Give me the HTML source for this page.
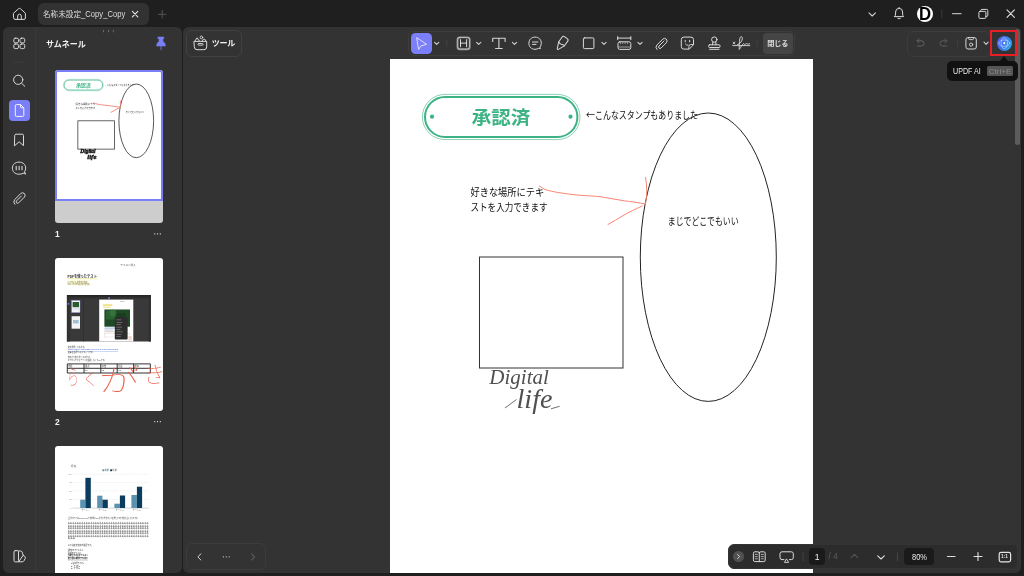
<!DOCTYPE html>
<html lang="ja">
<head>
<meta charset="utf-8">
<title>UPDF</title>
<style>
*{box-sizing:border-box;margin:0;padding:0}
html,body{width:1024px;height:576px;overflow:hidden;background:#1f1f1f}
body{position:relative;font-family:"Liberation Sans","Noto Sans CJK JP",sans-serif;color:#e6e6e6;font-size:8.5px}
.abs{position:absolute}
.t{position:absolute;white-space:nowrap;line-height:1}
#left{left:3.2px;top:27px;width:178.4px;height:545.8px;background:#333;border-radius:6px;overflow:hidden}
#main{left:183.2px;top:27px;width:837.6px;height:545.8px;background:#333;border-radius:6px;overflow:hidden}
#tab{left:38px;top:3px;width:111px;height:21.5px;background:#323232;border-radius:6px}
.box{position:absolute;border:1px solid #3e3e3e;border-radius:6px}
.thumb{position:absolute;left:51.7px;width:108px;background:#fff;border-radius:3px;overflow:hidden}
#page{left:206.9px;top:31.8px;width:423.2px;height:520px;background:#fff}
.doc{color:#111;font-family:"Liberation Sans","Noto Sans CJK JP",sans-serif}
svg{position:absolute;left:0;top:0;overflow:visible}
</style>
</head>
<body>
<div id="wrap" style="position:absolute;left:0;top:0;width:1024px;height:576px;will-change:transform">

<!-- ===== title bar ===== -->
<div id="tab" class="abs"></div>
<div class="t" style="left:43px;top:10.3px;font-size:8.3px;color:#dcdcdc;transform:scaleX(0.919);transform-origin:0 0">名称未設定_Copy_Copy</div>

<!-- ===== left panel ===== -->
<div id="left" class="abs">
  <div class="abs" style="left:32px;top:0;width:1px;height:545px;background:#3a3a3a"></div>
  <div class="abs" style="left:6px;top:73px;width:21px;height:21px;border-radius:4px;background:#7b7ff7"></div>
  <div class="t" style="left:43.2px;top:12.6px;font-size:8.4px;font-weight:bold;color:#f2f2f2;transform:scaleX(0.955);transform-origin:0 0">サムネール</div>

  <!-- thumb 1 -->
  <div class="thumb" id="th1" style="top:43.2px;height:152.5px;background:#cdcdcd;background-image:radial-gradient(#bcbcbc 0.5px,transparent 0.6px);background-size:2px 2px">
    <div class="abs" style="left:0;top:0;width:108px;height:131px;background:#fff;border:2px solid #7b7ff7;border-radius:3px 3px 0 0"></div>
  </div>
  <div class="t" style="left:51.8px;top:203.2px;font-size:8.4px;color:#f4f4f4;font-weight:bold">1</div>
  

  <!-- thumb 2 -->
  <div class="thumb" id="th2" style="top:231px;height:153px"></div>
  <div class="t" style="left:51.8px;top:390.8px;font-size:8.4px;color:#f4f4f4;font-weight:bold">2</div>
  

  <!-- thumb 3 -->
  <div class="thumb" id="th3" style="top:419px;height:153px"></div>
</div>

<!-- ===== main panel ===== -->
<div id="main" class="abs">
  <div id="page" class="abs"></div>
</div>



<div class="box" style="left:186px;top:30px;width:55.5px;height:26.5px;border-color:#414141;z-index:4"></div>
<div class="t" style="left:211.8px;top:39.5px;font-size:8px;font-weight:bold;color:#f0f0f0;z-index:7;letter-spacing:-0.3px">ツール</div>


<!-- ===== center toolbar ===== -->
<div class="box" style="left:408.3px;top:30.5px;width:387.2px;height:25.7px;border-color:#3c3c3c;z-index:4"></div>
<div class="abs" style="left:410.8px;top:32.5px;width:21.3px;height:21.3px;border-radius:4.5px;background:#7b7ffa;z-index:4"></div>
<div class="abs" style="left:763.2px;top:32.8px;width:29.8px;height:20.8px;border-radius:4px;background:#454545;z-index:4"></div>
<div class="t" style="left:767.3px;top:39.8px;font-size:7.2px;font-weight:bold;color:#dedede;z-index:7;letter-spacing:-0.2px">閉じる</div>


<!-- ===== top right / right toolbar ===== -->
<div class="abs" style="left:917px;top:5.6px;width:16.4px;height:16.4px;border-radius:50%;background:#fff;overflow:hidden;z-index:4"></div>
<div class="t" style="left:919.4px;top:5.2px;font-size:18.6px;font-weight:bold;color:#000;z-index:7;transform:scaleX(0.9);transform-origin:0 0">D</div>
<div class="abs" style="left:1014.6px;top:28.5px;width:5.6px;height:116.5px;border-radius:3px;background:#5c5c5c;z-index:4"></div>
<div class="box" style="left:906.6px;top:30.6px;width:84px;height:26.4px;border-color:#3c3c3c;z-index:4"></div>
<div class="abs" style="left:989.7px;top:30px;width:28.4px;height:25.6px;border:2.9px solid #e61e25;z-index:8"></div>
<div class="abs" style="left:996.8px;top:35.7px;width:15px;height:15px;border-radius:50%;background:linear-gradient(115deg,#5a5ff4 0%,#3f78f2 45%,#2bb2e2 100%);z-index:4"></div>
<div class="abs" style="left:947px;top:60.6px;width:71.2px;height:20.6px;border-radius:5px;background:#111;z-index:8"></div>
<div class="abs" style="left:999.7px;top:56px;width:0;height:0;border-left:4.6px solid transparent;border-right:4.6px solid transparent;border-bottom:5px solid #111;z-index:9"></div>
<div class="t" style="left:953px;top:67.2px;font-size:8.4px;color:#e8e8e8;z-index:9;transform:scaleX(0.85);transform-origin:0 0">UPDF AI</div>
<div class="abs" style="left:987px;top:66px;width:26.2px;height:10.2px;border-radius:1.5px;background:#555;z-index:9"></div>
<div class="t" style="left:988.8px;top:67.5px;font-size:8px;color:#8b8b8b;z-index:10;letter-spacing:0px">Ctrl+E</div>


<!-- ===== bottom bars ===== -->
<div class="box" style="left:186.4px;top:543.3px;width:79.2px;height:26.4px;border-color:#3c3c3c;z-index:4"></div>
<div class="abs" style="left:728px;top:543.7px;width:289.6px;height:25.8px;border-radius:6px;background:#2c2c2c;border:1px solid #343434;z-index:6"></div>
<div class="abs" style="left:733.1px;top:551.2px;width:10.6px;height:10.6px;border-radius:50%;background:#515151;z-index:7"></div>
<div class="abs" style="left:809.4px;top:548px;width:15.6px;height:17px;border-radius:4px;background:#1a1a1a;z-index:7"></div>
<div class="t" style="left:814.7px;top:552.6px;font-size:8.6px;color:#f2f2f2;z-index:9">1</div>
<div class="t" style="left:828.6px;top:552.8px;font-size:8.2px;color:#5c5c5c;z-index:9">/ 4</div>
<div class="abs" style="left:904px;top:548px;width:30.3px;height:17px;border-radius:4px;background:#1a1a1a;z-index:7"></div>
<div class="t" style="left:911.8px;top:553px;font-size:8.3px;color:#ececec;z-index:9;transform:scaleX(0.9);transform-origin:0 0">80%</div>
<div class="t" style="left:1001.1px;top:554.7px;font-size:4.8px;font-weight:bold;color:#e6e6e6;z-index:9;letter-spacing:-0.1px">1:1</div>

<!-- ===== document content (global coords) ===== -->
<svg id="docsvg" width="1024" height="576" viewBox="0 0 1024 576" style="z-index:5">
  <!-- stamp -->
  <rect x="422.4" y="94.4" width="157.6" height="45.2" rx="22.6" fill="none" stroke="#3db384" stroke-width="0.7" opacity="0.85"/>
  <rect x="425" y="97" width="152.4" height="40" rx="20" fill="none" stroke="#3db384" stroke-width="2"/>
  <circle cx="432" cy="116.7" r="2.1" fill="#3db384"/>
  <circle cx="570.5" cy="116.7" r="2.1" fill="#3db384"/>
  <text x="471.8" y="124.2" font-family="'Liberation Sans','Noto Sans CJK JP',sans-serif" font-weight="700" font-size="18.6" fill="#3db384" textLength="58.6" lengthAdjust="spacingAndGlyphs">承認済</text>
  <!-- ellipse / rect -->
  <ellipse cx="708.3" cy="257.2" rx="68" ry="144.2" fill="none" stroke="#222" stroke-width="1"/>
  <rect x="479.5" y="257" width="143.5" height="111" fill="none" stroke="#333" stroke-width="1"/>
  <!-- red arrow -->
  <path d="M539.6 186.2 C542 187 543 189 546 189.8 C550 191 553 191.6 557.4 192.4 C565 193.6 571 194.4 578 195.1 C586 195.8 594 196 601 196.8 C609 198 617 199.8 624.4 200.8 C631 201.6 639 202.6 645.4 204.2 C646.4 199 646.9 194 646.7 189.6 C646.6 185 646.2 181 645.6 177.3" fill="none" stroke="#f58672" stroke-width="1" stroke-linecap="round" stroke-linejoin="round"/>
  <path d="M642.2 206 C636 209 629 212 623 215.6 C618 218.6 613 222 608 224.5" fill="none" stroke="#f58672" stroke-width="1" stroke-linecap="round"/>
  <!-- texts -->
  <g font-family="'Liberation Sans','Noto Sans CJK JP',sans-serif" fill="#111" font-size="10.4">
    <text x="586" y="118.8" font-family="'Noto Sans CJK JP',sans-serif" textLength="9" lengthAdjust="spacingAndGlyphs">←</text><text x="595" y="118.8" textLength="103" lengthAdjust="spacingAndGlyphs">こんなスタンプもありました</text>
    <text x="470.5" y="196.2" textLength="73.6" lengthAdjust="spacingAndGlyphs">好きな場所にテキ</text>
    <text x="470.5" y="210.6" textLength="77" lengthAdjust="spacingAndGlyphs">ストを入力できます</text>
    <text x="667.8" y="225" textLength="70.8" lengthAdjust="spacingAndGlyphs">まじでどこでもいい</text>
  </g>
  <!-- signature -->
  <g font-family="'Liberation Serif',serif" font-style="italic" fill="#505050" font-size="14">
    <text x="489.3" y="384" font-size="21.5" textLength="59.5" lengthAdjust="spacingAndGlyphs">Digital</text>
    <text x="516.5" y="408" font-size="27" textLength="36" lengthAdjust="spacingAndGlyphs">life</text>
  </g>
  <path d="M505 408 L516.5 399.5 M559.7 406.3 L551 408.8" stroke="#333" stroke-width="0.7" fill="none"/>
</svg>



<!-- ===== thumbnails content (global coords) ===== -->
<svg id="thsvg" width="1024" height="576" viewBox="0 0 1024 576" style="z-index:5">

  <!-- thumb 1 content: page scaled -->
  <g transform="translate(55 70.25) scale(0.2553) translate(-390 -59)">
    <rect x="422.4" y="94.4" width="157.6" height="45.2" rx="22.6" fill="none" stroke="#3db384" stroke-width="1.2" opacity="0.8"/>
    <rect x="425.5" y="97.5" width="151.4" height="39" rx="19.5" fill="none" stroke="#3db384" stroke-width="3"/>
    <text x="501" y="124.3" text-anchor="middle" font-family="'Liberation Sans','Noto Sans CJK JP',sans-serif" font-weight="700" font-size="20" fill="#3db384" letter-spacing="-0.6">承認済</text>
    <ellipse cx="708.3" cy="257.2" rx="68" ry="144.2" fill="none" stroke="#333" stroke-width="3.2"/>
    <rect x="479.5" y="257" width="143.5" height="111" fill="none" stroke="#444" stroke-width="3.2"/>
    <path d="M539.6 186.2 C550 191 565 193.6 578 195.1 C601 196.8 624 200.8 645.4 204.2 C646.9 194 646.2 181 645.6 177.3 M642.2 206 C629 212 618 218.6 608 224.5" fill="none" stroke="#f4806e" stroke-width="3.4"/>
    <g font-family="'Liberation Sans','Noto Sans CJK JP',sans-serif" fill="#222" font-size="10.4">
      <text x="586" y="118.8" textLength="112" lengthAdjust="spacingAndGlyphs">←こんなスタンプもありました</text>
      <text x="470.5" y="196.2" textLength="77" lengthAdjust="spacingAndGlyphs">好きな場所にテキ</text>
      <text x="470.5" y="210.6" textLength="77" lengthAdjust="spacingAndGlyphs">ストを入力できます</text>
      <text x="667.5" y="225" textLength="72.5" lengthAdjust="spacingAndGlyphs">まじでどこでもいい</text>
    </g>
    <g font-family="'Liberation Serif',serif" font-style="italic" font-weight="bold" fill="#111" stroke="#111" stroke-width="1.6">
      <text x="489.3" y="384" font-size="21.5" textLength="59.5" lengthAdjust="spacingAndGlyphs">Digital</text>
      <text x="516.5" y="408" font-size="27" textLength="36" lengthAdjust="spacingAndGlyphs">life</text>
    </g>
  </g>

  <!-- thumb 2 content -->
  <g font-family="'Liberation Sans','Noto Sans CJK JP',sans-serif" fill="#333">
    <text x="120.3" y="266.2" font-size="2.6" fill="#555">テキスト挿入</text>
    <rect x="67.4" y="278.3" width="30" height="0.9" fill="#f1ec9a"/>
    <text x="67.5" y="278" font-size="4" font-weight="bold" fill="#333" textLength="29.4" lengthAdjust="spacingAndGlyphs">PDFを使ったテスト</text>
    <rect x="67.4" y="280.6" width="20.4" height="2.2" fill="#faf7c4"/>
    <rect x="67.4" y="283" width="23.2" height="2.2" fill="#faf7c4"/>
    <text x="67.5" y="282.5" font-size="2.3" fill="#555" textLength="20" lengthAdjust="spacingAndGlyphs">ハイライトも付けられて</text>
    <text x="67.5" y="284.9" font-size="2.3" fill="#555" textLength="22.8" lengthAdjust="spacingAndGlyphs">コメントやメモも入力もできます。</text>
  </g>
  <!-- screenshot -->
  <rect x="66.9" y="295" width="84" height="46.5" fill="#393939"/>
  <rect x="66.9" y="295" width="84" height="1.8" fill="#252525"/>
  <rect x="66.9" y="296.8" width="84" height="1.9" fill="#303030"/>
  <rect x="66.9" y="298.7" width="2.8" height="42.8" fill="#313131"/>
  <rect x="83" y="298.7" width="0.6" height="42.8" fill="#2c2c2c"/>
  <rect x="148.6" y="298.7" width="2.3" height="42.8" fill="#303030"/>
  <circle cx="68.4" cy="303.8" r="0.9" fill="#7b7ff7"/>
  <rect x="108.2" y="297.2" width="1.7" height="1.7" rx="0.4" fill="#7b7ff7"/>
  <rect x="71.6" y="300.4" width="8.4" height="12.2" fill="#f4f4f4" stroke="#8a8cf0" stroke-width="0.4"/>
  <rect x="72.6" y="302" width="6.4" height="5.2" fill="#2a5b30"/>
  <rect x="72.6" y="308.4" width="6.4" height="1" fill="#c9d3ea"/>
  <rect x="71.6" y="316.2" width="8.4" height="12.5" fill="#f4f4f4"/>
  <rect x="73" y="320" width="5.6" height="3.4" fill="#9fc0d6"/>
  <rect x="99.2" y="299.6" width="34.1" height="41.9" fill="#fff"/>
  <rect x="103" y="304.3" width="9.4" height="1.5" fill="#e8df76"/>
  <rect x="103" y="306.6" width="7.4" height="1.3" fill="#efe99a"/>
  <rect x="120" y="301.2" width="4.6" height="0.7" fill="#bbb"/>
  <rect x="104.4" y="309.5" width="25.6" height="17.2" fill="#1f4a26"/>
  <rect x="106" y="310.5" width="9" height="9" fill="#2f6a36" opacity="0.75"/>
  <rect x="117" y="313" width="9" height="10" fill="#183a1d" opacity="0.8"/>
  <circle cx="113" cy="313" r="3.4" fill="#3f8145" opacity="0.55"/>
  <rect x="104.4" y="327.6" width="11" height="1" fill="#9db7ea"/>
  <rect x="104.4" y="329.6" width="9" height="0.8" fill="#bbb"/>
  <rect x="104.4" y="331.4" width="10" height="0.8" fill="#c8c8c8"/>
  <rect x="104.4" y="333.6" width="25" height="3.4" fill="none" stroke="#e0c7c2" stroke-width="0.4"/>
  <rect x="114.8" y="317.3" width="12.8" height="22.3" rx="0.8" fill="#2d2d2d"/>
  <g fill="#8a8a8a">
    <rect x="116.4" y="319.6" width="5" height="0.6"/><rect x="116.4" y="322" width="6" height="0.6"/>
    <rect x="116.4" y="324.4" width="4.4" height="0.6"/><rect x="116.4" y="326.8" width="5.6" height="0.6"/>
    <rect x="116.4" y="329.2" width="4" height="0.6"/><rect x="116.4" y="331.6" width="6.4" height="0.6"/>
    <rect x="116.4" y="334" width="5" height="0.6"/><rect x="116.4" y="336.4" width="4.4" height="0.6"/>
  </g>
  <rect x="128.4" y="336" width="3.4" height="4.6" fill="#f3d9d4"/>
  <g font-family="'Liberation Sans','Noto Sans CJK JP',sans-serif" fill="#444" font-size="2.4">
    <text x="67.7" y="347.8" textLength="18.4" lengthAdjust="spacingAndGlyphs">文字選択してみます。</text>
    <text x="67.7" y="350.4" fill="#2a5bd0" textLength="50.6" lengthAdjust="spacingAndGlyphs" text-decoration="underline">www.example.com/digital-life/pdf-test-page-sample.html</text>
    <text x="67.7" y="352.8" textLength="26.8" lengthAdjust="spacingAndGlyphs">文章左右選べるスタンプです。</text>
    <text x="67.7" y="357.7" textLength="23.8" lengthAdjust="spacingAndGlyphs">最初から表を作ってみます。</text>
    <text x="67.7" y="360.8" textLength="38.4" lengthAdjust="spacingAndGlyphs">エクセルやでもアプリを起動しなくてOKです。</text>
  </g>
  <rect x="67.2" y="363.4" width="50.8" height="0.7" fill="#3b6fe0" opacity="0"/>
  <path d="M67.3 363.9 H150.3 V373 H67.3 Z M67.3 368.3 H150.3 M84 363.9 V373 M100.8 363.9 V373 M117.2 363.9 V373 M133.6 363.9 V373" fill="none" stroke="#1c1c1c" stroke-width="0.9"/>
  <g font-family="'Liberation Sans','Noto Sans CJK JP',sans-serif" fill="#333" font-size="2.2">
    <text x="68.2" y="366.9">項目</text><text x="85" y="366.9">国語</text><text x="101.8" y="366.9">算数</text><text x="118.2" y="366.9">社会</text><text x="134.6" y="366.9">理科</text>
    <text x="68.2" y="371.4">A</text><text x="85" y="371.4">80</text><text x="101.8" y="371.4">65</text><text x="118.2" y="371.4">72</text><text x="134.6" y="371.4">90</text>
  </g>
  <g font-family="'Liberation Sans','Noto Sans CJK JP',sans-serif" font-weight="100" fill="#ee5f4a">
    <text x="67" y="384" font-size="21" textLength="12" lengthAdjust="spacingAndGlyphs">ら</text>
    <text x="82" y="384.6" font-size="17">く</text>
    <text x="99" y="391" font-size="30" textLength="40" lengthAdjust="spacingAndGlyphs">が</text>
    <text x="143.5" y="382.4" font-size="22">き</text>
  </g>

  <!-- thumb 3 content -->
  <g font-family="'Liberation Sans','Noto Sans CJK JP',sans-serif" fill="#444">
    <text x="70.8" y="467" font-size="2.8" fill="#555">得点</text>
    <rect x="102.4" y="469.3" width="1.9" height="1.9" fill="#5b92b0"/>
    <text x="104.8" y="471.1" font-size="2.1" fill="#666">前期</text>
    <rect x="110.2" y="469.3" width="1.9" height="1.9" fill="#0b3c5d"/>
    <text x="112.6" y="471.1" font-size="2.1" fill="#666">後期</text>
    <path d="M72.4 474.2 H148.7 M72.4 482.5 H148.7 M72.4 490.8 H148.7 M72.4 499.4 H148.7" stroke="#d4d8dc" stroke-width="0.4" stroke-dasharray="0.8 0.6" fill="none"/>
    <path d="M72.4 508.1 H148.7" stroke="#a8aeb4" stroke-width="0.5" fill="none"/>
    <g font-size="1.9" fill="#888" text-anchor="end">
      <text x="71.6" y="474.9">100</text><text x="71.6" y="483.2">75</text><text x="71.6" y="491.5">50</text><text x="71.6" y="500.1">25</text><text x="71.6" y="508.7">0</text>
    </g>
    <rect x="80.2" y="499.7" width="5.2" height="8.3" fill="#5b92b0"/><rect x="85.4" y="477.8" width="5.4" height="30.2" fill="#0b3c5d"/><rect x="97.2" y="495.7" width="5.2" height="12.3" fill="#5b92b0"/><rect x="102.4" y="499.7" width="5.4" height="8.3" fill="#0b3c5d"/><rect x="114.4" y="503.7" width="5.5" height="4.3" fill="#5b92b0"/><rect x="119.9" y="495.5" width="5.2" height="12.5" fill="#0b3c5d"/><rect x="131.4" y="495" width="5.5" height="13" fill="#5b92b0"/><rect x="136.9" y="486.7" width="5.2" height="21.3" fill="#0b3c5d"/>
    <g font-size="2" fill="#777" text-anchor="middle">
      <text x="85.5" y="510.9">チーム A</text><text x="102.5" y="510.9">チーム B</text><text x="119.7" y="510.9">チーム C</text><text x="136.8" y="510.9">チーム D</text>
    </g>
    <g font-size="2.4" fill="#444">
      <text x="67.7" y="519.2" textLength="71.4" lengthAdjust="spacingAndGlyphs">上記のグラフはGoogle Docsで作成後にPDF形式へ書き出した文書をそのまま取り込んだものです。</text>
      <text x="67.7" y="524.4" textLength="81" lengthAdjust="spacingAndGlyphs">ああああああああああああああああああああああああああああああああああああ</text><text x="67.7" y="526.9" textLength="81" lengthAdjust="spacingAndGlyphs">ああああああああああああああああああああああああああああああああああああ</text><text x="67.7" y="529.4" textLength="81" lengthAdjust="spacingAndGlyphs">ああああああああああああああああああああああああああああああああああああ</text><text x="67.7" y="531.9" textLength="81" lengthAdjust="spacingAndGlyphs">ああああああああああああああああああああああああああああああああああああ</text><text x="67.7" y="534.4" textLength="81" lengthAdjust="spacingAndGlyphs">ああああああああああああああああああああああああああああああああああああ</text><text x="67.7" y="536.9" textLength="81" lengthAdjust="spacingAndGlyphs">ああああああああああああああああああああああああああああああああああああ</text>
      <text x="67.7" y="539.4" textLength="7.6" lengthAdjust="spacingAndGlyphs">あああ</text>
      <text x="67.7" y="545.8" textLength="25.4" lengthAdjust="spacingAndGlyphs">以下は文字装飾の確認です。</text>
      <text x="67.7" y="551.3" textLength="16.2" lengthAdjust="spacingAndGlyphs">通常のテキスト</text>
      <text x="67.7" y="553.8" textLength="14.2" lengthAdjust="spacingAndGlyphs">斜体のテキスト</text>
      <text x="67.7" y="556.3" font-weight="bold" fill="#222" text-decoration="underline" textLength="20.4" lengthAdjust="spacingAndGlyphs">下線付きの太字テキスト</text>
      <text x="67.7" y="558.9" font-weight="bold" fill="#222" text-decoration="underline" textLength="20.4" lengthAdjust="spacingAndGlyphs">取り消し線のテキスト</text>
      <text x="71" y="564.2" textLength="13" lengthAdjust="spacingAndGlyphs">● 箇条書きその1</text>
      <text x="71" y="566.7" textLength="9" lengthAdjust="spacingAndGlyphs">● その2</text>
      <text x="71" y="569.2" textLength="9" lengthAdjust="spacingAndGlyphs">● その3</text>
    </g>
  </g>

</svg>

<!-- ===== UI icons (global coords) ===== -->
<svg id="uisvg" width="1024" height="576" viewBox="0 0 1024 576" style="z-index:6" fill="none" stroke="#dadada" stroke-width="1" stroke-linecap="round" stroke-linejoin="round">
  <!-- home -->
  <path d="M13.6 13.2 L18.6 8.7 Q19.5 8 20.4 8.7 L25.4 13.2 V18 Q25.4 19.4 24 19.4 H15 Q13.6 19.4 13.6 18 Z"/>
  <path d="M17.7 19.2 V16 Q17.7 14.2 19.5 14.2 Q21.3 14.2 21.3 16 V19.2"/>
  <!-- tab close / plus -->
  <path d="M132.4 11.4 L137.8 16.8 M137.8 11.4 L132.4 16.8" stroke="#e8e8e8" stroke-width="1.1"/>
  <path d="M158.4 14.3 H166 M162.2 10.5 V18.1" stroke="#555"/>
  <!-- panel grip dots -->
  <path d="M103.5 30.3 v1.6 M108.5 30.3 v1.6 M113.3 30.3 v1.6" stroke="#6a6a6a" stroke-width="1"/>
  <!-- grid icon -->
  <g stroke="#d6d6d6">
    <rect x="13.8" y="38.2" width="4.7" height="4.6" rx="1.4"/>
    <rect x="20" y="38.2" width="4.7" height="4.6" rx="1.4"/>
    <rect x="13.8" y="44" width="4.7" height="4.6" rx="1.4"/>
    <rect x="20" y="44" width="4.7" height="4.6" rx="1.4"/>
  </g>
  <path d="M14 62 H24.5" stroke="#484848" stroke-dasharray="1 1.2" stroke-linecap="butt"/>
  <!-- search -->
  <circle cx="18.2" cy="79.8" r="4.6"/>
  <path d="M21.7 83.3 L24.8 86.3"/>
  <!-- page (active) -->
  <path d="M15.3 105.6 Q15.3 104.6 16.3 104.6 H20.6 L23.8 107.8 V115.4 Q23.8 116.4 22.8 116.4 H16.3 Q15.3 116.4 15.3 115.4 Z M20.6 104.8 V107 Q20.6 107.8 21.4 107.8 H23.6" stroke="#f4f4ff"/>
  <!-- bookmark -->
  <path d="M14.7 135.4 Q14.7 134.2 15.9 134.2 H22.3 Q23.5 134.2 23.5 135.4 V145.6 L19.1 141.8 L14.7 145.6 Z"/>
  <!-- comment -->
  <path d="M24.3 172.9 Q22 174.2 19 174.2 C15 174.2 12.4 171.6 12.4 168.1 C12.4 164.6 15 162.1 19 162.1 C23 162.1 25.7 164.6 25.7 168.1 Q25.7 170 24.6 171.6 L25.2 174 Z"/>
  <path d="M16.2 166.4 V169.8 M19.1 166.4 V169.8 M22 166.4 V169.8" stroke-width="1.1"/>
  <!-- paperclip -->
  <path d="M21.4 196 L16.6 200.8 Q15.6 201.9 16.6 202.9 Q17.6 203.8 18.7 202.8 L24.3 197.2 Q26 195.3 24.3 193.5 Q22.5 191.9 20.7 193.6 L14.8 199.5 Q12.6 202 14.8 204.3"/>
  <path d="M154.2 233.9 h1.1 M157 233.9 h1.1 M159.8 233.9 h1.1 M154.2 421.6 h1.1 M157 421.6 h1.1 M159.8 421.6 h1.1" stroke="#cdcdcd" stroke-width="1.1" stroke-linecap="butt"/>
  <!-- swatch icon -->
  <rect x="14" y="550.6" width="4.5" height="11.3" rx="1.3"/>
  <path d="M18.6 551 H20.6 Q21.8 551 22.2 552.2 L23.2 555.2 L18.8 561.6 M23.2 555.4 L24.6 556.2 Q25.8 557 25.2 558.3 L24 560.8 Q23.4 561.8 22.2 561.8 H18.6"/>
  <!-- pin -->
  <path d="M158.2 37 H163.8 V38.7 H162.9 V41.3 Q165.4 42.8 165.4 46 H156.6 Q156.6 42.8 159.1 41.3 V38.7 H158.2 Z" fill="#7b7ff7" stroke="#7b7ff7" stroke-width="0.6"/>
  <path d="M161 46 V49.8" stroke="#6a6edc" stroke-width="1"/>
  <!-- tools icon -->
  <path d="M194.3 41.4 H206.7 V47 Q206.7 49.7 204 49.7 H197 Q194.3 49.7 194.3 47 Z"/>
  <rect x="198" y="43.5" width="5.1" height="1.7" rx="0.85" stroke-width="0.9"/>
  <path d="M194.9 41 L197.1 37.8 L199.4 41"/>
  <circle cx="201.4" cy="37.4" r="1.35" stroke-width="0.9"/>
  <path d="M202.3 41 Q202.5 39.2 204.1 39.2 Q205.7 39.2 205.9 41" stroke-width="0.9"/>

  <!-- == center toolbar icons == -->
  <path d="M417 37.9 L426.6 44.3 L421 45.9 L418.8 49.2 Z" stroke="#dcdcff" stroke-width="1"/>
  <path d="M434.59999999999997 42.3 L436.7 44.4 L438.8 42.3" stroke="#d0d0d0" stroke-width="1.1"/>
  <path d="M446.8 39.5 V47" stroke="#4c4c4c" stroke-dasharray="1 0.8" stroke-linecap="butt"/>
  <!-- H -->
  <rect x="457.4" y="37.2" width="12.4" height="12.2" rx="2.4" stroke="#9a9a9a" stroke-width="1.6"/>
  <rect x="457.9" y="37.7" width="11.4" height="11.2" rx="2" stroke="#e2e2e2" stroke-width="0.5"/>
  <path d="M460.5 39.6 V46.8 M466.6 39.6 V46.8 M460.5 43.1 H466.6" stroke="#ececec" stroke-width="0.9"/>
  <path d="M476.59999999999997 42.3 L478.7 44.4 L480.8 42.3" stroke="#d0d0d0" stroke-width="1.1"/>
  <!-- T -->
  <path d="M492.7 41.4 V38.3 H505.1 V41.4 M498.9 38.3 V48.4 M495.6 48.5 H502.2" stroke="#d4d4d4" stroke-width="1.1"/>
  <path d="M512.4 42.3 L514.5 44.4 L516.6 42.3" stroke="#d0d0d0" stroke-width="1.1"/>
  <!-- comment -->
  <path d="M540.2 48.4 L538.6 48.4 Q537 49.3 535 49.3 C531.3 49.3 528.9 46.7 528.9 43.2 C528.9 39.7 531.4 37.1 535.1 37.1 C538.8 37.1 541.3 39.7 541.3 43.2 Q541.3 45.4 540.1 46.9 Z"/>
  <path d="M532.5 42 H537.9 M532.5 44.4 H536" stroke-width="1"/>
  <!-- highlighter -->
  <g transform="translate(557.4 49.5) rotate(36)">
    <path d="M-0.7 -0.7 L-3.5 -7.1 V-12.6 Q-3.5 -14.6 -1.5 -14.6 H1.5 Q3.5 -14.6 3.5 -12.6 V-7.1 L0.7 -0.7 Q0 0.4 -0.7 -0.7 Z"/>
    <path d="M-3.5 -7.1 Q-1.8 -5.6 0 -6.6 Q1.8 -7.8 3.5 -7.1"/>
  </g>
  <!-- square -->
  <rect x="583.4" y="37.9" width="10.5" height="10.7" rx="1"/>
  <path d="M601.9 42.3 L604 44.4 L606.1 42.3" stroke="#d0d0d0" stroke-width="1.1"/>
  <!-- measure -->
  <path d="M617.7 36.6 V39.7 M630.8 36.6 V39.7 M617.7 38.1 H630.8" stroke-width="1"/>
  <rect x="618" y="41.8" width="12.8" height="7.6" rx="1.8"/>
  <path d="M620.5 42.3 V43.8 M622.8 42.3 V43.8 M625.1 42.3 V43.8 M627.4 42.3 V43.8" stroke-width="0.7" stroke="#bbb"/>
  <path d="M618.4 47 H630.4" stroke-width="0.8" stroke="#bbb"/>
  <path d="M637.9 42.3 L640 44.4 L642.1 42.3" stroke="#d0d0d0" stroke-width="1.1"/>
  <!-- paperclip -->
  <path d="M664 41 L659 46 Q658 47.1 659 48.1 Q660 49 661.1 48 L666.3 42.8 Q668 40.9 666.3 39.1 Q664.5 37.5 662.7 39.2 L657 44.9 Q654.8 47.4 657 49.5 "/>
  <!-- sticker -->
  <path d="M693.5 44.4 V39.6 Q693.5 37.1 691 37.1 H683.8 Q681.3 37.1 681.3 39.6 V46.6 Q681.3 49.1 683.8 49.1 H688.8 Z"/>
  <path d="M693.3 44.5 H690.8 Q688.9 44.5 688.9 46.4 V48.9" stroke-width="0.9"/>
  <path d="M685.2 40.6 V41.6 M689.6 40.6 V41.6" stroke-width="1.1"/>
  <path d="M685.4 44 Q686.4 45.6 688 45.2" stroke-width="0.9"/>
  <!-- stamp -->
  <circle cx="714.3" cy="39.6" r="2.7"/>
  <path d="M712.9 42 L712.5 44.8 M715.7 42 L716.1 44.8"/>
  <rect x="708.6" y="44.8" width="11.4" height="2.7" rx="1"/>
  <path d="M709.6 49.3 H719"/>
  <!-- signature -->
  <path d="M732.8 45.6 H749.8" stroke-width="0.9"/>
  <path d="M733 42 L735 44 M735 42 L733 44" stroke-width="0.8"/>
  <path d="M737.4 44.8 C740 44 742.6 40.6 742.4 38.2 C742.2 36 740.2 36.2 739.8 38.6 C739.2 42 739.4 47 739.2 49.4 C741 47.4 742 44.4 743.4 43.6 C744 43.4 744 44.8 744.6 44.6 C745.4 44.4 745.8 43.4 746.6 43.6 C747.2 43.8 747.4 44.6 749.6 43.8" stroke-width="0.9"/>
  <path d="M757 39.5 V47" stroke="#4c4c4c" stroke-dasharray="1 0.8" stroke-linecap="butt"/>
  <!-- == title bar right == -->
  <path d="M869 12.9 L872.2 16 L875.4 12.9" stroke="#cfcfcf" stroke-width="1.1"/>
  <path d="M894.6 16.6 H903.6 Q902.6 15.6 902.6 14 V12 Q902.6 8.4 899.1 8.4 Q895.6 8.4 895.6 12 V14 Q895.6 15.6 894.6 16.6 Z M899.1 7.4 V8.2 M897.8 18.4 Q899.1 19.4 900.4 18.4" stroke="#d8d8d8"/>
  <path d="M941.8 10 V17.5" stroke="#3a3a3a"/>
  <path d="M952.5 13.7 H961.2" stroke="#d8d8d8"/>
  <path d="M980.8 11.3 V10.4 Q980.8 9.4 981.8 9.4 H986.8 Q987.8 9.4 987.8 10.4 V15.4 Q987.8 16.4 986.8 16.4 H985.9" stroke="#d8d8d8"/>
  <rect x="978.9" y="11.4" width="7" height="7" rx="1" stroke="#d8d8d8"/>
  <path d="M1007 9.8 L1014.4 17.4 M1014.4 9.8 L1007 17.4" stroke="#e0e0e0" stroke-width="1.1"/>
  <!-- == right toolbar == -->
  <path d="M917.2 40.8 H921.4 Q924 40.8 924 43.4 Q924 46 921.4 46 H917.6 M919 38.8 L917 40.8 L919 42.8" stroke="#646464"/>
  <path d="M946.8 40.8 H942.6 Q940 40.8 940 43.4 Q940 46 942.6 46 H946.4 M945 38.8 L947 40.8 L945 42.8" stroke="#5c5c5c"/>
  <path d="M957.5 39.5 V47" stroke="#4a4a4a" stroke-dasharray="1 0.8" stroke-linecap="butt"/>
  <path d="M965.9 39.6 Q965.9 37.6 967.9 37.6 H974.3 Q976.3 37.6 976.3 39.6 V47 Q976.3 49 974.3 49 H967.9 Q965.9 49 965.9 47 Z"/>
  <path d="M968.6 37.8 V38.6 Q968.6 39.6 969.6 39.6 H972.6 Q973.6 39.6 973.6 38.6 V37.8" stroke-width="0.9"/>
  <circle cx="971.1" cy="44.6" r="1.6" stroke-width="0.9"/>
  <path d="M984 42.2 L986.1 44.3 L988.2 42.2" stroke="#d0d0d0" stroke-width="1.1"/>
  <!-- AI glyph -->
  <ellipse cx="1004.3" cy="43.2" rx="5.4" ry="3.2" stroke="#cfe0ff" stroke-width="0.8" opacity="0.7"/>
  <ellipse cx="1004.3" cy="43.2" rx="3.2" ry="5.4" stroke="#cfe0ff" stroke-width="0.8" opacity="0.7"/>
  <circle cx="1004.3" cy="43.2" r="1.1" fill="#fff" stroke="none"/>
</svg>

<svg id="uisvg2" width="1024" height="576" viewBox="0 0 1024 576" style="z-index:9" fill="none" stroke="#dadada" stroke-width="1" stroke-linecap="round" stroke-linejoin="round">
  <!-- bottom-left nav -->
  <path d="M200.8 553.8 L197.9 556.9 L200.8 560" stroke="#d4d4d4" stroke-width="1"/>
  <path d="M222.9 556.9 h0.9 M225.8 556.9 h0.9 M228.7 556.9 h0.9" stroke="#cfcfcf" stroke-width="1.1" stroke-linecap="butt"/>
  <path d="M251.6 553.8 L254.6 556.9 L251.6 560" stroke="#5a5a5a" stroke-width="1.1"/>
  <!-- bottom-right bar -->
  <path d="M737.6 554.5 L739.7 556.5 L737.6 558.5" stroke="#d6d6d6" stroke-width="1"/>
  <!-- book -->
  <path d="M759.3 552.4 V561.4 M753.4 553.2 Q753.4 551.8 754.8 551.8 H757.8 Q759.3 551.8 759.3 553.2 Q759.3 551.8 760.8 551.8 H763.8 Q765.2 551.8 765.2 553.2 V560.2 Q765.2 561.6 763.8 561.6 H754.8 Q753.4 561.6 753.4 560.2 Z"/>
  <path d="M755.2 554.4 H757.4 M755.2 556.6 H757.4 M755.2 558.8 H757.4 M761.2 554.4 H763.4 M761.2 556.6 H763.4 M761.2 558.8 H763.4" stroke-width="0.8" stroke="#c8c8c8"/>
  <!-- presentation -->
  <path d="M784 559.6 H782 Q780 559.6 780 557.6 V553.8 Q780 551.8 782 551.8 H791.3 Q793.3 551.8 793.3 553.8 V557.6 Q793.3 559.6 791.3 559.6 H789.4"/>
  <path d="M786.7 559.2 L788.6 562.4 H784.8 Z" stroke-width="0.9"/>
  <path d="M803.1 553 V560.6" stroke="#444"/>
  <path d="M851 557.6 L854.4 554.4 L857.8 557.6" stroke="#555" stroke-width="1.1"/>
  <path d="M877.7 555.8 L881 559 L884.3 555.8" stroke="#dedede" stroke-width="1.1"/>
  <path d="M897.4 553 V560.6" stroke="#484848"/>
  <path d="M947.4 556.5 H955" stroke="#dcdcdc" stroke-width="1.1"/>
  <path d="M974 556.5 H982 M978 552.5 V560.5" stroke="#e4e4e4" stroke-width="1.1"/>
  <rect x="999.2" y="552.4" width="11.4" height="9.4" rx="1.8" stroke="#e4e4e4" stroke-width="1.2"/>
</svg>

</div>
</body>
</html>
